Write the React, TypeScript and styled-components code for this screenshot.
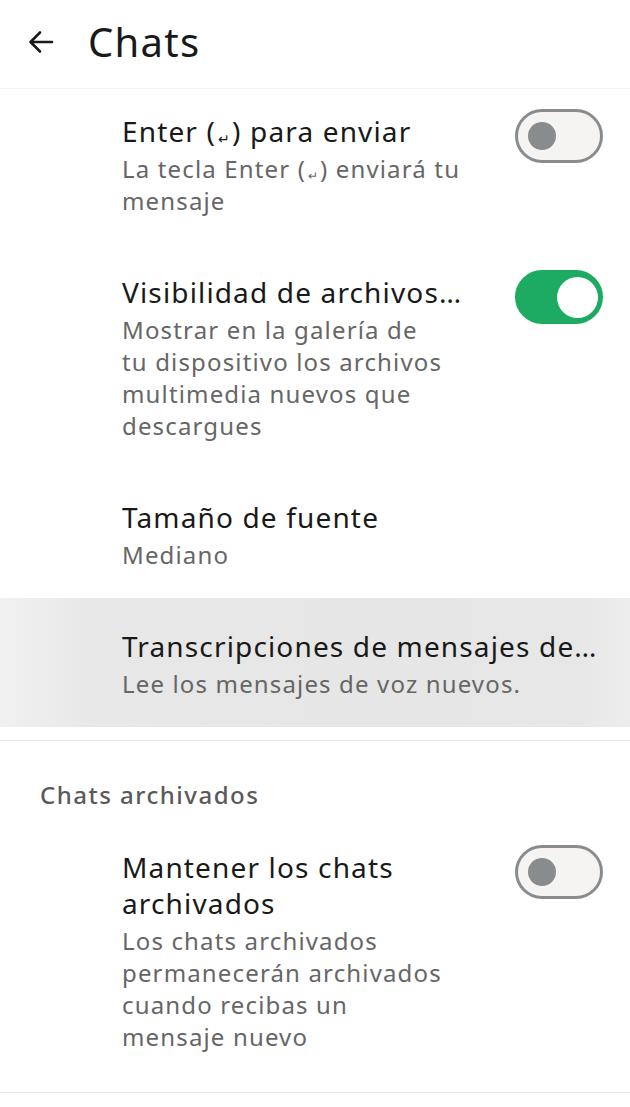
import React from "react"
import styled, { createGlobalStyle } from "styled-components"

const GlobalStyle = createGlobalStyle`
  html, body {
    margin: 0;
    padding: 0;
    background: #ffffff;
  }
  body {
    font-family: "Noto Sans", "Open Sans", sans-serif;
    -webkit-font-smoothing: antialiased;
  }
`

const Page = styled.div`
  width: 630px;
  min-height: 1107px;
  background: #ffffff;
  color: #191919;
`

const Header = styled.header`
  display: flex;
  align-items: center;
  height: 89px;
  padding-left: 27px;
  border-bottom: 1px solid #f2f2f2;
  box-sizing: border-box;
`

const BackButton = styled.button`
  border: none;
  background: none;
  padding: 0;
  width: 28px;
  height: 28px;
  display: flex;
  align-items: center;
  justify-content: center;
  color: #1a1a1a;
  margin-right: 33px;
  margin-top: -4px;
`

const Title = styled.h1`
  margin: 0;
  margin-top: -4px;
  font-size: 40px;
  font-weight: 400;
  line-height: 48px;
  letter-spacing: 1.3px;
`

const Item = styled.div<{ $active?: boolean; $first?: boolean }>`
  display: flex;
  align-items: flex-start;
  gap: 20px;
  padding: ${(p) => (p.$first ? "24px" : "30px")} 27px 27px 122px;
  background: ${(p) =>
    p.$active
      ? "linear-gradient(90deg, #f1f1f1 0%, #e8e8e8 14%, #e6e6e6 60%, #e7e7e7 92%, #ededed 100%)"
      : "transparent"};
`

const TextBlock = styled.div`
  flex: 1;
  min-width: 0;
`

const ItemTitle = styled.div`
  font-size: 28px;
  line-height: 36px;
  letter-spacing: 1.15px;
  color: #191919;
  white-space: nowrap;
`

const ItemTitleWrap = styled(ItemTitle)`
  white-space: normal;
`

const ItemSub = styled.div`
  font-size: 24px;
  line-height: 32px;
  letter-spacing: 1.15px;
  color: #666666;
  margin-top: 4px;
`

const EnterGlyph = styled.span`
  font-size: 0.5em;
  line-height: 0;
  letter-spacing: 0;
  vertical-align: -0.15em;
  padding: 0 2px;
`

const Toggle = styled.div<{ $on?: boolean }>`
  flex: none;
  width: 88px;
  height: 54px;
  margin-top: -4px;
  box-sizing: border-box;
  border-radius: 27px;
  border: 3px solid ${(p) => (p.$on ? "#1daa61" : "#888c8f")};
  background: ${(p) => (p.$on ? "#1daa61" : "#f5f4f2")};
  display: flex;
  align-items: center;
  justify-content: ${(p) => (p.$on ? "flex-end" : "flex-start")};
  padding: ${(p) => (p.$on ? "0 2px" : "0 10px")};
`

const Knob = styled.div<{ $on?: boolean }>`
  width: ${(p) => (p.$on ? "41px" : "28px")};
  height: ${(p) => (p.$on ? "41px" : "28px")};
  border-radius: 50%;
  background: ${(p) => (p.$on ? "#ffffff" : "#888c8f")};
`

const Divider = styled.div<{ $top: number }>`
  height: 1px;
  background: #e6e6e6;
  margin-top: ${(p) => p.$top}px;
`

const SectionHeader = styled.div`
  padding: 38px 0 8px 40px;
  font-size: 24px;
  line-height: 32px;
  font-weight: 500;
  letter-spacing: 1.5px;
  color: #5a5a5a;
`

const ArrowIcon = () => (
  <svg width="28" height="28" viewBox="0 0 28 28" fill="none">
    <path
      d="M25 14H4M13 4.5L3.5 14L13 23.5"
      stroke="currentColor"
      strokeWidth="2.6"
      strokeLinecap="round"
      strokeLinejoin="round"
    />
  </svg>
)

const Switch = ({ on }: { on?: boolean }) => (
  <Toggle $on={on}>
    <Knob $on={on} />
  </Toggle>
)

const Enter = () => <EnterGlyph>↵</EnterGlyph>

export default function App() {
  return (
    <Page>
      <GlobalStyle />
      <Header>
        <BackButton aria-label="Atrás">
          <ArrowIcon />
        </BackButton>
        <Title>Chats</Title>
      </Header>

      <Item $first>
        <TextBlock>
          <ItemTitle>
            Enter (<Enter />) para enviar
          </ItemTitle>
          <ItemSub>
            La tecla Enter (<Enter />) enviará tu
            <br />
            mensaje
          </ItemSub>
        </TextBlock>
        <Switch />
      </Item>

      <Item>
        <TextBlock>
          <ItemTitle>Visibilidad de archivos…</ItemTitle>
          <ItemSub>
            Mostrar en la galería de
            <br />
            tu dispositivo los archivos
            <br />
            multimedia nuevos que
            <br />
            descargues
          </ItemSub>
        </TextBlock>
        <Switch on />
      </Item>

      <Item>
        <TextBlock>
          <ItemTitle>Tamaño de fuente</ItemTitle>
          <ItemSub>Mediano</ItemSub>
        </TextBlock>
      </Item>

      <Item $active>
        <TextBlock>
          <ItemTitle>Transcripciones de mensajes de…</ItemTitle>
          <ItemSub>Lee los mensajes de voz nuevos.</ItemSub>
        </TextBlock>
      </Item>

      <Divider $top={13} />

      <SectionHeader>Chats archivados</SectionHeader>

      <Item>
        <TextBlock>
          <ItemTitleWrap>
            Mantener los chats
            <br />
            archivados
          </ItemTitleWrap>
          <ItemSub>
            Los chats archivados
            <br />
            permanecerán archivados
            <br />
            cuando recibas un
            <br />
            mensaje nuevo
          </ItemSub>
        </TextBlock>
        <Switch />
      </Item>

      <Divider $top={12} />
    </Page>
  )
}
